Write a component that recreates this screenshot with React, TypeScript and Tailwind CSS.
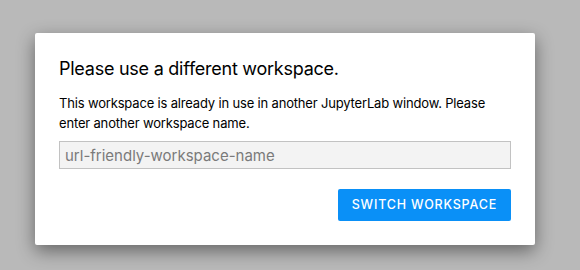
const App = () => {
  return (
    <div className="w-[580px] h-[270px] bg-[#b9b9b9] overflow-hidden pt-[33px] pl-[35px] font-['Inter',sans-serif]">
      <div className="w-[500px] bg-white rounded-[2px] p-6 pt-6 shadow-[0_6px_18px_rgba(0,0,0,0.45)]">
        <h2 className="text-[18px] leading-6 text-black tracking-[-0.25px]">Please use a different workspace.</h2>
        <p className="mt-3 text-[13px] leading-5 text-black tracking-[-0.17px]">
          This workspace is already in use in another JupyterLab window. Please enter another workspace name.
        </p>
        <input
          className="mt-2 w-full h-[28px] bg-[#f3f3f3] border border-[#c2c2c2] px-[5px] text-[15px] text-black placeholder:text-[#7a7a7a] outline-none"
          placeholder="url-friendly-workspace-name"
        />
        <div className="flex justify-end mt-5">
          <button className="h-8 px-[14px] bg-[#0a90f7] rounded-[2px] text-white text-[12.5px] font-medium tracking-[0.8px]">
            SWITCH WORKSPACE
          </button>
        </div>
      </div>
    </div>
  )
}

export default App
